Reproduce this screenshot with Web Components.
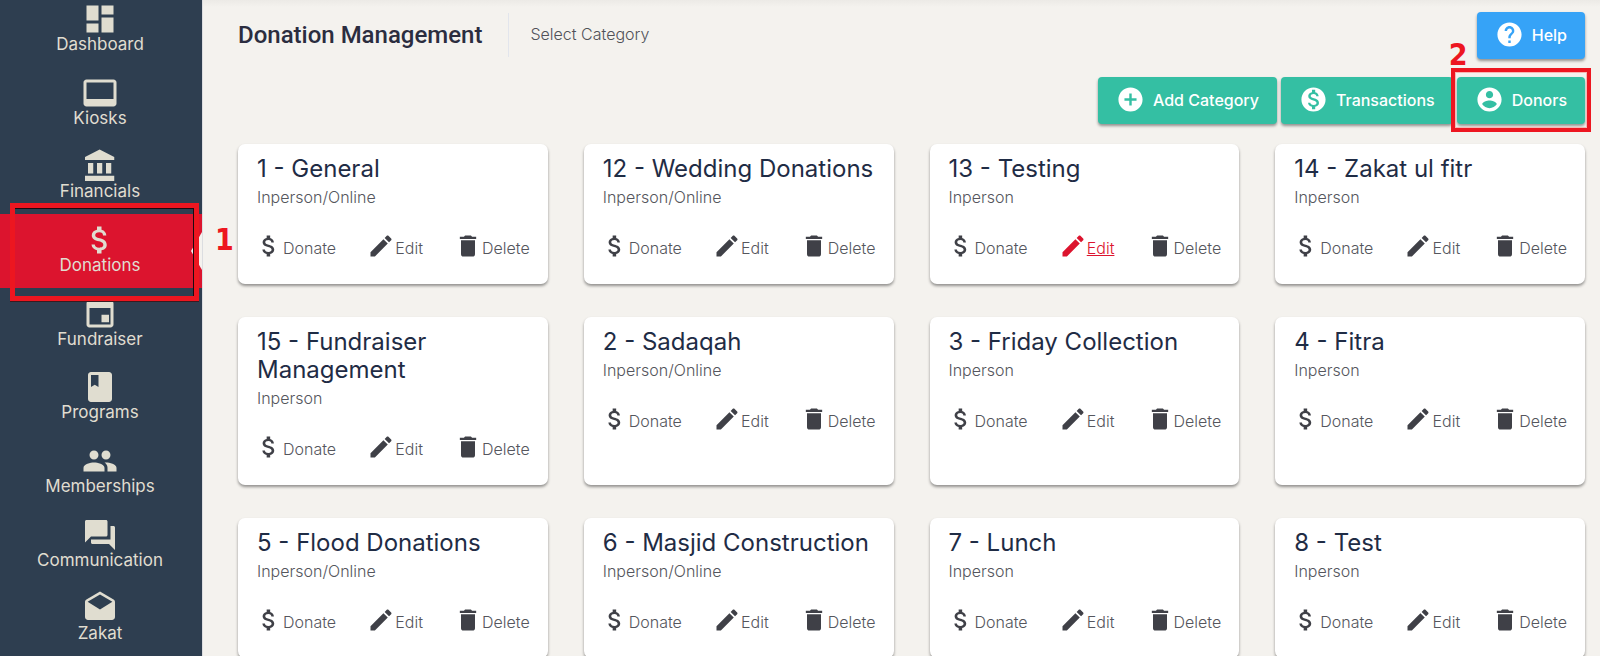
<!DOCTYPE html>
<html lang="en">
<head>
<meta charset="utf-8">
<meta name="viewport" content="width=device-width, initial-scale=1">
<title>Donation Management</title>
<style>
  html, body { margin: 0; height: 100%; }
  body {
    font-family: Inter, "Open Sans", sans-serif;
    background: #f4f2ee;
    color: #3f4047;
    overflow: hidden;
  }
</style>
</head>
<body>
<app-shell>
  <side-nav slot="nav">
    <nav-item icon="dashboard">Dashboard</nav-item>
    <nav-item icon="kiosk">Kiosks</nav-item>
    <nav-item icon="bank">Financials</nav-item>
    <nav-item icon="dollar" active>Donations<call-out slot="mark" class="step-one" number="1"></call-out></nav-item>
    <nav-item icon="event">Fundraiser</nav-item>
    <nav-item icon="book">Programs</nav-item>
    <nav-item icon="people">Memberships</nav-item>
    <nav-item icon="forum">Communication</nav-item>
    <nav-item icon="drafts">Zakat</nav-item>
  </side-nav>
  <page-header heading="Donation Management" subheading="Select Category">
    <action-button icon="help" tone="info">Help</action-button>
  </page-header>
  <tool-bar>
    <action-button icon="add">Add Category</action-button>
    <action-button icon="paid">Transactions</action-button>
    <action-button icon="account">Donors<call-out slot="mark" class="step-two" number="2"></call-out></action-button>
  </tool-bar>
  <card-grid>
    <donation-card heading="1 - General" mode="Inperson/Online"></donation-card>
    <donation-card heading="12 - Wedding Donations" mode="Inperson/Online"></donation-card>
    <donation-card heading="13 - Testing" mode="Inperson" current="edit"></donation-card>
    <donation-card heading="14 - Zakat ul fitr" mode="Inperson"></donation-card>
    <donation-card heading="15 - Fundraiser Management" mode="Inperson"></donation-card>
    <donation-card heading="2 - Sadaqah" mode="Inperson/Online"></donation-card>
    <donation-card heading="3 - Friday Collection" mode="Inperson"></donation-card>
    <donation-card heading="4 - Fitra" mode="Inperson"></donation-card>
    <donation-card heading="5 - Flood Donations" mode="Inperson/Online"></donation-card>
    <donation-card heading="6 - Masjid Construction" mode="Inperson/Online"></donation-card>
    <donation-card heading="7 - Lunch" mode="Inperson"></donation-card>
    <donation-card heading="8 - Test" mode="Inperson"></donation-card>
  </card-grid>
</app-shell>

<script>
const ICONS = {
  dashboard: 'M3 13h8V3H3v10zm0 8h8v-6H3v6zm10 0h8V11h-8v10zm0-18v6h8V3h-8z',
  kiosk: 'M21 3H3c-1.1 0-2 .9-2 2v14c0 1.100.9 2 2 2h18c1.100 0 2-.9 2-2V5c0-1.100-.9-2-2-2zm0 13H3V5h18v11z',
  bank: 'M4 10v7h3.500v-7H4zm6 0v7h3.500v-7H10zM2 22h19.500v-3.500H2V22zm14-12v7h3.500v-7H16zM11.750 1L2 6v2h19.500V6l-9.750-5z',
  dollar: 'M11.800 10.900c-2.270-.59-3-1.200-3-2.150 0-1.090 1.010-1.850 2.700-1.850 1.780 0 2.440.85 2.500 2.100h2.210c-.07-1.720-1.120-3.300-3.210-3.810V3h-3v2.160c-1.940.42-3.500 1.680-3.500 3.610 0 2.310 1.910 3.460 4.700 4.130 2.500.6 3 1.480 3 2.410 0 .69-.49 1.790-2.700 1.790-2.060 0-2.870-.92-2.980-2.100h-2.200c.12 2.190 1.760 3.420 3.680 3.830V21h3v-2.150c1.950-.37 3.500-1.500 3.500-3.550 0-2.840-2.430-3.810-4.700-4.400z',
  event: 'M18 12.500h-5v5h5v-5zM16 1v2H8V1H6v2H5c-1.110 0-1.990.9-1.990 2L3 19c0 1.100.89 2 2 2h14c1.100 0 2-.9 2-2V5c0-1.100-.9-2-2-2h-1V1h-2zm3 18H5V8h14v11z',
  book: 'M18 2H6c-1.100 0-2 .9-2 2v16c0 1.100.9 2 2 2h12c1.100 0 2-.9 2-2V4c0-1.100-.9-2-2-2zM6 4h5v8l-2.500-1.500L6 12V4z',
  people: 'M16 11c1.660 0 2.990-1.340 2.990-3S17.660 5 16 5c-1.660 0-3 1.340-3 3s1.340 3 3 3zm-8 0c1.660 0 2.990-1.340 2.990-3S9.660 5 8 5C6.340 5 5 6.340 5 8s1.340 3 3 3zm0 2c-2.330 0-7 1.170-7 3.500V19h14v-2.500c0-2.330-4.670-3.500-7-3.500zm8 0c-.29 0-.62.02-.97.05 1.160.84 1.970 1.970 1.970 3.450V19h6v-2.500c0-2.330-4.670-3.500-7-3.500z',
  forum: 'M21 6h-2v9H6v2c0 .55.45 1 1 1h11l4 4V7c0-.55-.45-1-1-1zm-4 6V3c0-.55-.45-1-1-1H3c-.55 0-1 .45-1 1v14l4-4h10c.55 0 1-.45 1-1z',
  drafts: 'M21.990 8c0-.72-.37-1.350-.94-1.700L12 1 2.950 6.300C2.380 6.650 2 7.280 2 8v10c0 1.100.9 2 2 2h16c1.100 0 2-.9 2-2l-.01-10zM12 13L3.740 7.840 12 3l8.260 4.840L12 13z',
  help: 'M12 2C6.480 2 2 6.480 2 12s4.480 10 10 10 10-4.480 10-10S17.520 2 12 2zm1 17h-2v-2h2v2zm2.070-7.750l-.9.92C13.450 12.900 13 13.500 13 15h-2v-.5c0-1.100.45-2.100 1.170-2.830l1.240-1.260c.37-.36.59-.86.59-1.410 0-1.100-.9-2-2-2s-2 .9-2 2H8c0-2.210 1.790-4 4-4s4 1.790 4 4c0 .88-.36 1.680-.93 2.250z',
  add: 'M12 2C6.480 2 2 6.480 2 12s4.480 10 10 10 10-4.480 10-10S17.520 2 12 2zm5 11h-4v4h-2v-4H7v-2h4V7h2v4h4v2z',
  paid: 'M12 2C6.480 2 2 6.480 2 12s4.480 10 10 10 10-4.480 10-10S17.520 2 12 2zm1.410 16.090V20h-2.670v-1.930c-1.710-.36-3.160-1.460-3.270-3.400h1.960c.1 1.050.82 1.870 2.650 1.870 1.960 0 2.400-.98 2.400-1.590 0-.83-.44-1.610-2.670-2.140-2.480-.6-4.180-1.620-4.180-3.670 0-1.720 1.390-2.840 3.110-3.210V4h2.670v1.950c1.860.45 2.790 1.860 2.850 3.390H14.300c-.05-1.110-.64-1.870-2.220-1.870-1.500 0-2.400.68-2.400 1.640 0 .84.65 1.390 2.670 1.910s4.180 1.390 4.180 3.910c-.01 1.830-1.380 2.830-3.120 3.160z',
  account: 'M12 2C6.480 2 2 6.480 2 12s4.480 10 10 10 10-4.480 10-10S17.520 2 12 2zm0 3c1.660 0 3 1.340 3 3s-1.340 3-3 3-3-1.340-3-3 1.340-3 3-3zm0 14.200c-2.500 0-4.710-1.280-6-3.220.03-1.990 4-3.080 6-3.080 1.990 0 5.970 1.090 6 3.080-1.290 1.940-3.500 3.220-6 3.220z',
  edit: 'M3 17.250V21h3.750L17.810 9.940l-3.750-3.750L3 17.250zM20.710 7.040c.39-.39.39-1.020 0-1.410l-2.340-2.340c-.39-.39-1.020-.39-1.410 0l-1.830 1.830 3.750 3.750 1.830-1.830z',
  trash: 'M6 19c0 1.100.9 2 2 2h8c1.100 0 2-.9 2-2V7H6v12zM19 4h-3.500l-1-1h-5l-1 1H5v2h14V4z'
};

function define(name, render) {
  customElements.define(name, class extends HTMLElement {
    connectedCallback() {
      if (this.shadowRoot) return;
      this.attachShadow({ mode: 'open' }).innerHTML = render(this);
    }
  });
}
const attr = (el, n) => el.getAttribute(n) || '';

define('md-icon', el => `
  <style>
    :host { display: block; flex: none; width: var(--icon-size, 28px); height: var(--icon-size, 28px); }
    svg { display: block; width: 100%; height: 100%; fill: currentColor; }
  </style>
  <svg viewBox="0 0 24 24" aria-hidden="true"><path d="${ICONS[attr(el, 'name')]}"/></svg>`);

define('app-shell', () => `
  <style>
    :host { display: grid; grid-template-columns: 202px minmax(0, 1fr); height: 100vh; overflow: hidden; }
    main {
      padding: 12px 15px 0 35px;
      overflow: hidden;
      border-left: 1px solid #dcdde0;
      box-sizing: border-box;
      background: linear-gradient(#eceae6, #f4f2ee 7px);
    }
    ::slotted(side-nav) { position: relative; z-index: 1; }
  </style>
  <slot name="nav"></slot>
  <main><slot></slot></main>`);

define('side-nav', () => `
  <style>
    :host { display: block; background: #2e3e50; min-height: 0; }
    nav { display: grid; grid-auto-rows: minmax(72px, 1fr); height: calc(100% + 7px); margin-top: -7px; }
  </style>
  <nav aria-label="Main"><slot></slot></nav>`);

define('nav-item', el => `
  <style>
    :host { display: block; position: relative; color: #e0ddd0; --icon-size: 36px; }
    :host([active]) { background: #dc142e; z-index: 2; }
    a {
      display: flex; flex-direction: column; align-items: center;
      padding: 8px 8px 0 6px; color: inherit; text-decoration: none;
      font-size: 17px; line-height: 14px;
    }
    :host([active])::after {
      content: ""; position: absolute; right: 0; top: 50%; margin-top: -19px;
      border: solid transparent; border-width: 19px 11px 19px 0; border-right-color: #f4f2ee;
    }
  </style>
  <a href="#"><md-icon name="${attr(el, 'icon')}"></md-icon><slot></slot></a>
  <slot name="mark"></slot>`);

define('call-out', el => `
  <style>
    :host { position: absolute; z-index: 3; pointer-events: none; box-sizing: border-box; border: 4px solid #ed1620;
      font: bold 30px/24px "DejaVu Sans Condensed", "DejaVu Sans", sans-serif; color: #ed1620; }
    :host(.step-one) { inset: -11px 3px -13px 10px; border-width: 5px; box-shadow: inset -1px 1px #1b0a10, 0 1px #3a1a20; }
    :host(.step-two) { inset: -9px -6px -8px -6px; box-shadow: inset 0 0 0 1px #f6b8b4; }
    b { position: absolute; }
    :host(.step-one) b { left: 100%; top: 20px; margin-left: 21px; }
    :host(.step-two) b { left: -6px; bottom: 100%; margin-bottom: 5px; }
  </style>
  <b>${attr(el, 'number')}</b>`);

define('page-header', el => `
  <style>
    :host { display: flex; justify-content: space-between; align-items: flex-start; }
    .titles { display: flex; align-items: center; height: 46px; }
    h1 { margin: 0; padding-right: 26px; font: 500 24px/44px Roboto, sans-serif; color: #2b2d3f; border-right: 1px solid #e2e5ec; }
    p { margin: 0 0 2px; padding-left: 21px; font-size: 16px; font-weight: 300; line-height: 24px; color: #505158; }
  </style>
  <div class="titles"><h1>${attr(el, 'heading')}</h1><p>${attr(el, 'subheading')}</p></div>
  <slot></slot>`);

define('tool-bar', () => `
  <style>:host { display: flex; justify-content: flex-end; gap: 4px; margin-top: 18px; }</style>
  <slot></slot>`);

define('action-button', el => `
  <style>
    :host { display: block; position: relative; --icon-size: 29px; }
    button {
      display: flex; align-items: center; gap: 8px; height: 47px; padding: 0 18px 2px;
      border: 0; border-radius: 4px; background: #34bfa3; color: #fff;
      font: 500 16px/24px Inter, sans-serif; white-space: nowrap;
      box-shadow: 0 2px 3px rgba(0, 0, 0, .4);
    }
    :host([tone="info"]) button { background: #36a3f7; }
  </style>
  <button type="button"><md-icon name="${attr(el, 'icon')}"></md-icon><slot></slot></button>
  <slot name="mark"></slot>`);

define('card-grid', () => `
  <style>:host { display: grid; grid-template-columns: repeat(4, minmax(0, 1fr)); gap: 33px 36px; margin-top: 20px; }</style>
  <slot></slot>`);

define('donation-card', el => `
  <style>
    :host {
      display: block; box-sizing: border-box; padding: 11px 17px 20px 19px;
      background: #fff; border-radius: 7px; box-shadow: 0 2px 3px rgba(0, 0, 0, .4);
    }
    h2 { margin: 0; font-size: 24px; font-weight: 400; line-height: 28px; color: #1f2c45; }
    p { margin: 2px 0 23px; font-size: 16px; font-weight: 300; line-height: 24px; color: #55565d; }
    .actions { display: flex; justify-content: space-between; margin: 0 1px 0 -2px; }
  </style>
  <h2>${attr(el, 'heading')}</h2>
  <p>${attr(el, 'mode')}</p>
  <div class="actions">
    <card-action icon="dollar" label="Donate"></card-action>
    <card-action icon="edit" label="Edit"${attr(el, 'current') === 'edit' ? ' current' : ''}></card-action>
    <card-action icon="trash" label="Delete"></card-action>
  </div>`);

define('card-action', el => `
  <style>
    :host { display: block; }
    a { display: flex; color: #3f4047; text-decoration: none; }
    span { font-size: 16px; font-weight: 300; line-height: 32px; color: #55565d; }
    :host([current]) a, :host([current]) span { color: #dc142e; }
    :host([current]) span { text-decoration: underline; }
  </style>
  <a href="#"><md-icon name="${attr(el, 'icon')}"></md-icon><span>${attr(el, 'label')}</span></a>`);
</script>
</body>
</html>
